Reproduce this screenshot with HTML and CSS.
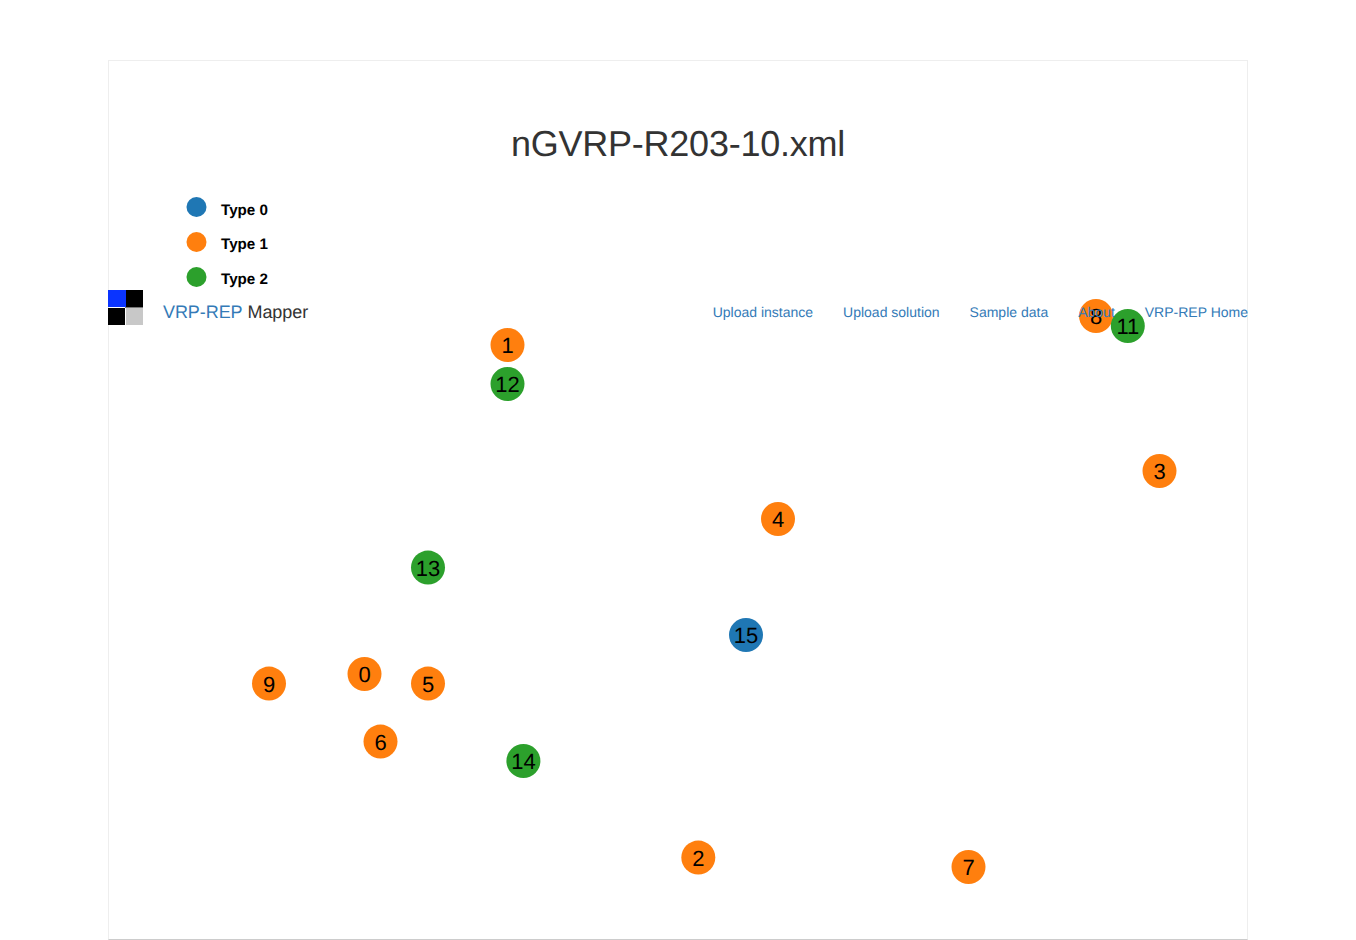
FILE: index.html
```html
<!DOCTYPE html>
<html>
<head>
    <title>VRP-REP Mapper</title>
    <link rel="stylesheet" href="styles.css">
</head>
<body>
    <div class="container">
        <!-- Navbar sits under the title and legend of the chart -->
        <nav class="navbar">
            <div class="brand">
                <svg class="logo" width="35" height="35" viewBox="0 0 35 35">
                    <rect x="0" y="0" width="18" height="17" fill="#0a34ff"/>
                    <rect x="18" y="0" width="17" height="17" fill="#000"/>
                    <rect x="0" y="18" width="17" height="17" fill="#000"/>
                    <rect x="18" y="18" width="17" height="17" fill="#c8c8c8"/>
                    <rect x="17" y="17" width="18" height="1" fill="#777"/>
                </svg>
                <a href="#" class="brand-link">VRP-REP</a>&nbsp;Mapper
            </div>
            <ul class="nav-links">
                <li><a href="#">Upload instance</a></li>
                <li><a href="#">Upload solution</a></li>
                <li><a href="#">Sample data</a></li>
                <li><a href="#">About</a></li>
                <li><a href="#">VRP-REP Home</a></li>
            </ul>
        </nav>

        <!-- Chart coordinates are the page coordinates minus the box corner (109, 61) -->
        <svg class="chart" width="1138" height="878" viewBox="109 61 1138 878">
            <text class="chart-title" x="678" y="156">nGVRP-R203-10.xml</text>

            <circle class="type-0" cx="196.5" cy="207" r="10"/>
            <text class="legend-label" x="221" y="214.5">Type 0</text>
            <circle class="type-1" cx="196.5" cy="242" r="10"/>
            <text class="legend-label" x="221" y="249">Type 1</text>
            <circle class="type-2" cx="196.5" cy="277" r="10"/>
            <text class="legend-label" x="221" y="283.5">Type 2</text>

            <circle class="type-1" cx="364.5" cy="674" r="17"/><text class="node-label" x="364.5" y="681.5">0</text>
            <circle class="type-1" cx="507.5" cy="345" r="17"/><text class="node-label" x="507.5" y="352.5">1</text>
            <circle class="type-1" cx="698.3" cy="857.6" r="17"/><text class="node-label" x="698.3" y="865.5">2</text>
            <circle class="type-1" cx="1159.5" cy="471" r="17"/><text class="node-label" x="1159.5" y="478.5">3</text>
            <circle class="type-1" cx="778" cy="519" r="17"/><text class="node-label" x="778" y="526.5">4</text>
            <circle class="type-1" cx="428" cy="683.6" r="17"/><text class="node-label" x="428" y="691.5">5</text>
            <circle class="type-1" cx="380.5" cy="741.6" r="17"/><text class="node-label" x="380.5" y="749.5">6</text>
            <circle class="type-1" cx="968.5" cy="867" r="17"/><text class="node-label" x="968.5" y="874.5">7</text>
            <circle class="type-1" cx="1096" cy="316" r="17"/><text class="node-label" x="1096" y="323.5">8</text>
            <circle class="type-1" cx="269" cy="683.6" r="17"/><text class="node-label" x="269" y="691.5">9</text>
            <circle class="type-2" cx="1127.8" cy="326" r="17"/><text class="node-label" x="1127.8" y="333.5">11</text>
            <circle class="type-2" cx="507.5" cy="384" r="17"/><text class="node-label" x="507.5" y="391.5">12</text>
            <circle class="type-2" cx="428" cy="567.6" r="17"/><text class="node-label" x="428" y="575.5">13</text>
            <circle class="type-2" cx="523.4" cy="761" r="17"/><text class="node-label" x="523.4" y="768.5">14</text>
            <circle class="type-0" cx="746" cy="635" r="17"/><text class="node-label" x="746" y="642.5">15</text>
        </svg>
    </div>
</body>
</html>
```

FILE: styles.css
```css
body {
    font-family: "Liberation Sans", Arial, sans-serif;
    font-size: 14px;
    color: #333;
    margin: 0;
    padding: 0;
    background-color: #fff;
    text-rendering: geometricPrecision;
}

a {
    color: #337ab7;
    text-decoration: none;
}

.container {
    position: relative;
    box-sizing: border-box;
    width: 1140px;
    height: 880px;
    margin: 60px auto 0;
    padding-top: 229px;
    border: 1px solid #eee;
    border-bottom-color: #ccc;
}

.navbar {
    position: relative;
    z-index: 1;
    display: flex;
    justify-content: space-between;
    margin: 0 -1px;
}

.brand {
    display: flex;
    align-items: flex-start;
    font-size: 18px;
    line-height: 44px;
    letter-spacing: -0.07px;
}

.logo {
    display: block;
    margin-right: 20px;
}

.nav-links {
    display: flex;
    gap: 30px;
    list-style: none;
    margin: 0;
    padding: 0;
    line-height: 44px;
}

.chart {
    position: absolute;
    top: 0;
    left: 0;
}

.chart-title {
    font-size: 36px;
    letter-spacing: -0.23px;
    fill: #333;
    text-anchor: middle;
}

.legend-label {
    font-size: 15.2px;
    font-weight: bold;
    fill: #000;
}

.node-label {
    font-size: 22px;
    fill: #000;
    text-anchor: middle;
}

.type-0 {
    fill: #1f77b4;
}

.type-1 {
    fill: #ff7f0e;
}

.type-2 {
    fill: #2ca02c;
}
```
